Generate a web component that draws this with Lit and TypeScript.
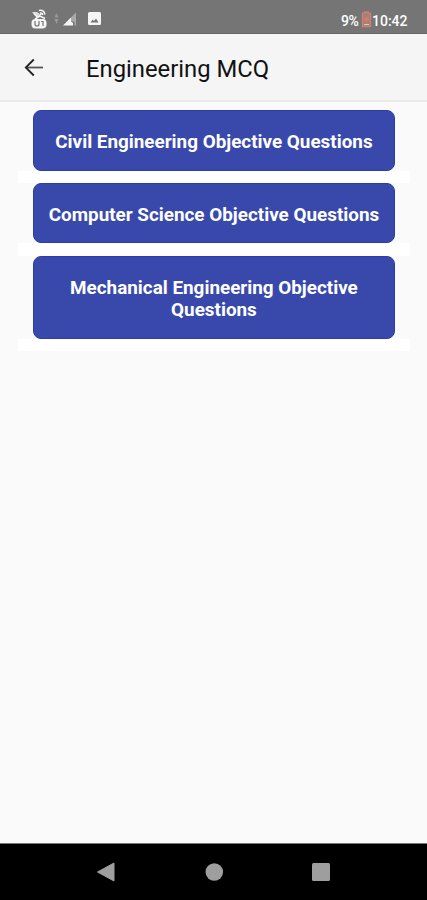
import { LitElement, html, css } from "lit";
import { customElement } from "lit/decorators.js";

@customElement("app-root")
export class AppRoot extends LitElement {
  static styles = css`
    :host { display: flex; flex-direction: column; width: 427px; height: 900px; background: #fafafa; font-family: Roboto, "Liberation Sans", sans-serif; overflow: hidden; }
    * { box-sizing: border-box; }
    svg { display: block; flex: none; }
    .status { height: 34px; flex: none; background: #757575; border-bottom: 1px solid #686868; display: flex; align-items: flex-start; justify-content: space-between; padding: 8px 18px 0 30px; color: #fff; }
    .clock { display: flex; align-items: center; padding-top: 3px; font-size: 14px; line-height: 18px; font-weight: 500; }
    .percent { width: 20px; letter-spacing: -0.4px; }
    .clock svg { margin-top: -3px; }
    .time { width: 37px; margin: 1px 0 0 0; white-space: nowrap; }
    .bar { height: 68px; flex: none; background: #f5f5f5; border-bottom: 2px solid #ebebeb; display: flex; align-items: center; padding-left: 24px; }
    .arrow { margin-top: 2px; }
    .title { margin: 3px 0 0 42px; font-size: 23.8px; line-height: 30px; font-weight: 400; color: #111; white-space: nowrap; }
    .list { flex: 1; display: flex; flex-direction: column; padding: 8.4px 17px 0 18px; }
    .button { display: block; width: 362.5px; margin-left: 14.7px; border: 1px solid #2e3da6; border-radius: 8px; background: #3949ab; color: #fff; font: inherit; font-size: 18.87px; line-height: 22.5px; font-weight: 700; text-align: center; padding: 19.8px 10px 16px; }
    .strip { height: 12.5px; background: #fff; }
    .nav { height: 57px; flex: none; background: #000; border-top: 1px solid #777; display: flex; justify-content: space-between; padding: 18px 96px 0 96px; }
  `;

  render() {
    const items = ["Civil Engineering Objective Questions", "Computer Science Objective Questions", "Mechanical Engineering Objective Questions"];
    return html`
      <div class="status">
        <svg width="74" height="22" viewBox="30 8 74 22" fill="#f5f5f5">
          <path d="M32 12 37 18 40 14 37 12Z" opacity=".8" />
          <path d="M34 13.5 38 17.5M38 17.5 42 13M39 10.5q5-1 6 4M40 13q2.5-.5 3 2M35 19 40 16 45 18.5" fill="none" stroke="#f5f5f5" stroke-width="1.5" />
          <rect x="31.5" y="19" width="15" height="9.5" rx="4" />
          <path d="M35 21v3q0 2 2 2t2-2v-3M41 21.5h2v4.5" fill="none" stroke="#757575" stroke-width="1.2" />
          <path d="M56.5 13 58.5 17.5H54.5ZM56.5 24 58.5 19H54.5Z" fill="#999" />
          <path d="M63 25.5 71 17.5V21.5L73 23V25.5Z" />
          <path d="M71 17.5 76 12.5V25.5H74.5V22L71 21Z" fill="#aaa" />
          <path fill-rule="evenodd" d="M89.5 12h10a1.5 1.5 0 0 1 1.5 1.5v10a1.5 1.5 0 0 1-1.5 1.5h-10a1.5 1.5 0 0 1-1.5-1.5v-10a1.5 1.5 0 0 1 1.5-1.5ZM90.5 22.5h8l-2.5-4-2 2.5-1.3-1.5Z" />
        </svg>
        <div class="clock">
          <span class="percent">9%</span>
          <svg width="11" height="17" viewBox="0 0 11 17">
            <path d="M3.5 1h4v1.2h2v13.3h-8V2.2h2Z" fill="#99857f" stroke="#df7a66" stroke-width="1.3" stroke-linejoin="round" />
            <path d="M5.5 6v5M3.2 8.5h4.6" stroke="#f0725d" stroke-width="1.9" />
            <path d="M3 13.5h5" stroke="#ccc" />
          </svg>
          <span class="time">10:42</span>
        </div>
      </div>
      <div class="bar">
        <svg class="arrow" width="20" height="20" viewBox="0 0 20 20" fill="none" stroke="#222" stroke-width="1.8"><path d="M2 9.5H19" stroke="#555" /><path d="M9.8 1.5 1.8 9.5 9.8 17.5" /></svg>
        <div class="title">Engineering MCQ</div>
      </div>
      <div class="list">${items.map((t) => html`<button class="button">${t}</button><div class="strip"></div>`)}</div>
      <div class="nav">
        <svg width="20" height="20"><path d="M1.5 10 18 1V19Z" fill="#9e9e9e" stroke="#9e9e9e" stroke-linejoin="round" /></svg>
        <svg width="20" height="20"><circle cx="10.3" cy="10" r="8.8" fill="#9e9e9e" /></svg>
        <svg width="20" height="20"><rect x="1" y="1" width="18" height="18" rx="1.5" fill="#9e9e9e" /></svg>
      </div>`;
  }
}
